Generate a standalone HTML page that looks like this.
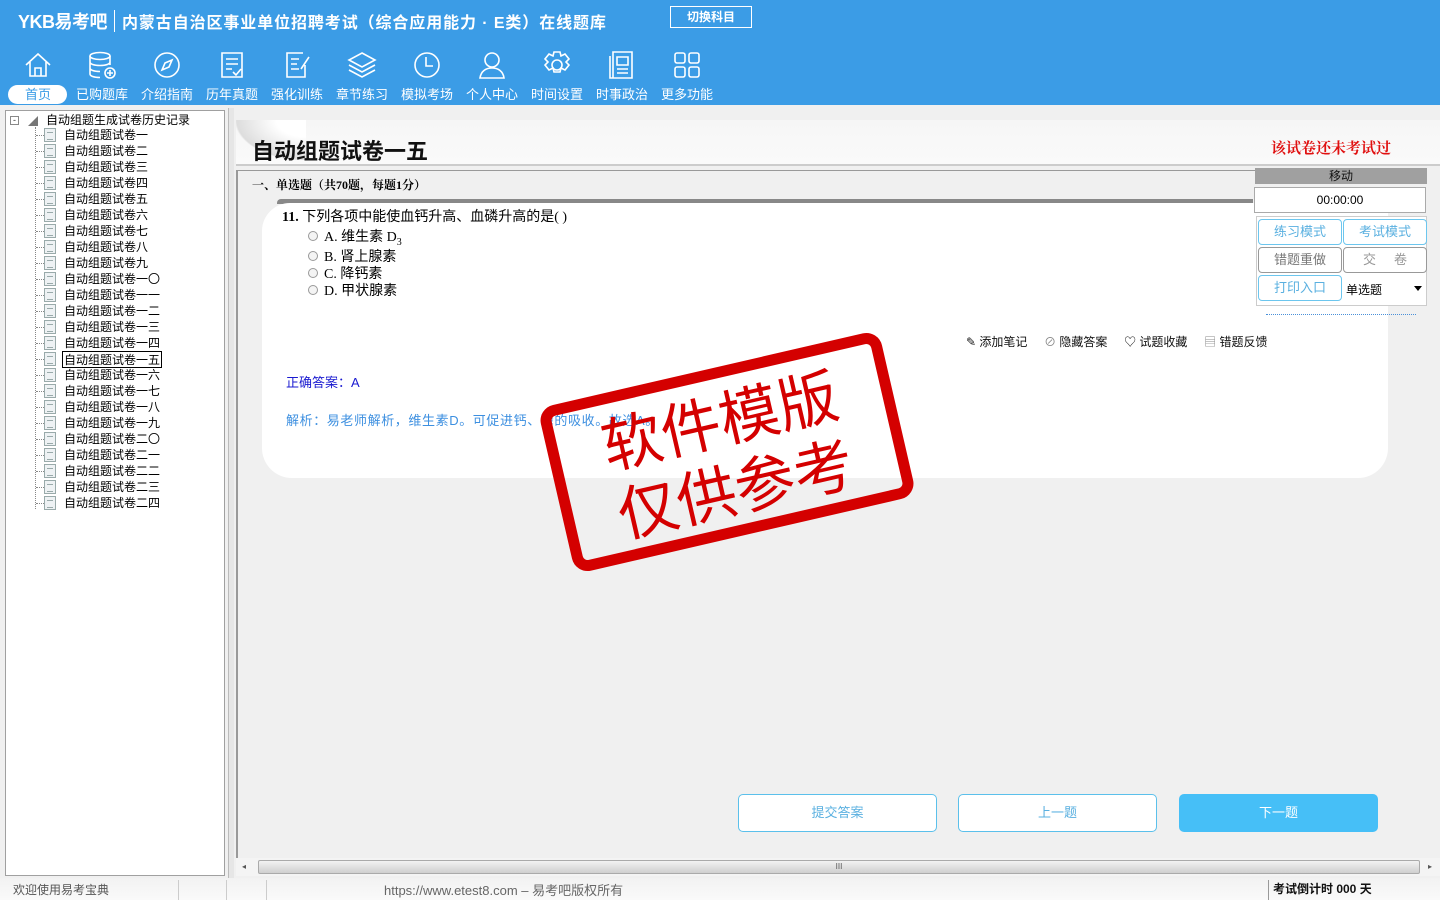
<!DOCTYPE html>
<html><head><meta charset="utf-8"><style>
*{margin:0;padding:0;box-sizing:border-box}
body{width:1440px;height:900px;overflow:hidden;background:#f0f0f0;font-family:"Liberation Sans","Noto Sans CJK SC",sans-serif;position:relative;font-size:12px}
.abs{position:absolute}
#hdr{left:0;top:0;width:1440px;height:105px;background:#3b9ce6}
.nav{position:absolute;top:49px;width:64px;text-align:center;color:#fff;font-size:13px}
.nav svg{display:block;margin:0 auto;width:32px;height:32px}
.nav span{display:block;margin-top:5px;line-height:18px}
.tree{left:5px;top:110px;width:220px;height:766px;background:#fff;border:1px solid #a0a0a0}
.it{position:absolute;left:64px;font-size:12px;color:#000;line-height:16px;height:16px}
.doc{position:absolute;left:44px;width:12px;height:14px;border:1px solid #9aa;background:#eef2f4}
.doc:after{content:"";position:absolute;left:2px;top:3px;width:6px;height:6px;border-top:1px solid #9aa;border-bottom:1px solid #9aa}
.dl{position:absolute;left:36px;width:8px;border-top:1px dotted #888}
.btn{position:absolute;top:794px;width:199px;height:38px;border:1px solid #5bc0eb;border-radius:5px;background:#fff;color:#5ab0e0;font-size:13px;text-align:center;line-height:36px}
.rb{position:absolute;width:84px;height:26px;border:1px solid #6cc6ee;border-radius:4px;background:#fff;color:#5ab0e0;font-size:13px;text-align:center;line-height:24px}
.opt{position:absolute;left:308px;font-size:14px;color:#000;font-family:"Liberation Serif","Noto Sans CJK SC",serif}
.opt i{display:inline-block;width:10px;height:10px;border:1px solid #999;border-radius:50%;margin-right:6px;background:#f4f4f4}
</style></head><body>
<div id="hdr" class="abs">
 <div class="abs" style="left:18px;top:8px;color:#fff;font-size:18px;font-weight:bold;letter-spacing:-0.5px">YKB易考吧</div>
 <div class="abs" style="left:114px;top:10px;width:1px;height:22px;background:#fff"></div>
 <div class="abs" style="left:122px;top:9px;color:#fff;font-size:16px;font-weight:bold;letter-spacing:0.9px">内蒙古自治区事业单位招聘考试（综合应用能力 · E类）在线题库</div>
 <div class="abs" style="left:670px;top:6px;width:82px;height:22px;border:1px solid #fff;color:#fff;font-size:12px;font-weight:bold;text-align:center;line-height:20px">切换科目</div>
 <div class="abs" style="left:8px;top:85px;width:59px;height:19px;background:#fff;border-radius:10px"></div>
 <div class="nav" style="left:6px"><svg viewBox="0 0 32 32" fill="none" stroke="#fff" stroke-width="1.6"><path d="M4 16L16 5l12 11M8 13v14h16V13M13 27v-8h6v8"/></svg><span style="color:#3b9ce6">首页</span></div>
 <div class="nav" style="left:70px"><svg viewBox="0 0 32 32" fill="none" stroke="#fff" stroke-width="1.6"><ellipse cx="14" cy="7" rx="10" ry="3.5"/><path d="M4 7v18c0 2 4 3.5 10 3.5M24 7v9M4 13c0 2 4 3.5 10 3.5s10-1.5 10-3.5M4 19c0 2 4 3.5 10 3.5"/><circle cx="24" cy="24" r="5"/><path d="M24 21v6M21 24h6"/></svg><span>已购题库</span></div>
 <div class="nav" style="left:135px"><svg viewBox="0 0 32 32" fill="none" stroke="#fff" stroke-width="1.6"><circle cx="16" cy="16" r="12"/><path d="M21 11l-3 7-7 3 3-7z"/></svg><span>介绍指南</span></div>
 <div class="nav" style="left:200px"><svg viewBox="0 0 32 32" fill="none" stroke="#fff" stroke-width="1.6"><path d="M6 4h20v24H6zM10 10h12M10 15h12M10 20h6M17 23l3 3 5-6"/></svg><span>历年真题</span></div>
 <div class="nav" style="left:265px"><svg viewBox="0 0 32 32" fill="none" stroke="#fff" stroke-width="1.6"><path d="M22 4H6v24h18V16M10 10h8M10 15h6M10 20h8M20 20l8-12"/></svg><span>强化训练</span></div>
 <div class="nav" style="left:330px"><svg viewBox="0 0 32 32" fill="none" stroke="#fff" stroke-width="1.6"><path d="M16 4l13 7-13 7-13-7zM3 16l13 7 13-7M3 21l13 7 13-7"/></svg><span>章节练习</span></div>
 <div class="nav" style="left:395px"><svg viewBox="0 0 32 32" fill="none" stroke="#fff" stroke-width="1.6"><circle cx="16" cy="16" r="12"/><path d="M15 8v9h7"/></svg><span>模拟考场</span></div>
 <div class="nav" style="left:460px"><svg viewBox="0 0 32 32" fill="none" stroke="#fff" stroke-width="1.6"><circle cx="16" cy="11" r="7"/><path d="M4 29c1-7 6-10 12-10s11 3 12 10z"/></svg><span>个人中心</span></div>
 <div class="nav" style="left:525px"><svg viewBox="0 0 32 32" fill="none" stroke="#fff" stroke-width="1.6"><path d="M13 3h6l1 4 4-2 4 5-3 3 3 3-4 5-4-2-1 4h-6l-1-4-4 2-4-5 3-3-3-3 4-5 4 2z"/><circle cx="16" cy="16" r="5"/></svg><span>时间设置</span></div>
 <div class="nav" style="left:590px"><svg viewBox="0 0 32 32" fill="none" stroke="#fff" stroke-width="1.6"><path d="M7 3h19v26H7zM4 7v22h3M11 8h11v8H11zM11 20h11M11 24h11"/></svg><span>时事政治</span></div>
 <div class="nav" style="left:655px"><svg viewBox="0 0 32 32" fill="none" stroke="#fff" stroke-width="1.6"><rect x="4" y="4" width="10" height="10" rx="2"/><rect x="18" y="4" width="10" height="10" rx="2"/><rect x="4" y="18" width="10" height="10" rx="2"/><rect x="18" y="18" width="10" height="10" rx="2"/></svg><span>更多功能</span></div>
</div>

<div class="abs tree">
 <div class="abs" style="left:4px;top:5px;width:9px;height:9px;border:1px solid #888;font-size:9px;line-height:6px;text-align:center;color:#333">-</div>
 <div class="abs" style="left:22px;top:5px;width:0;height:0;border-left:10px solid transparent;border-bottom:10px solid #777"></div>
 <div class="abs" style="left:29px;top:16px;height:382px;border-left:1px dotted #888"></div>
 <div class="it" style="left:40px;top:1px">自动组题生成试卷历史记录</div>
</div>
<div id="items"></div>
<script>
var n=["一","二","三","四","五","六","七","八","九","一〇","一一","一二","一三","一四","一五","一六","一七","一八","一九","二〇","二一","二二","二三","二四"];
var h="";for(var i=0;i<n.length;i++){var y=127+i*16;h+='<div class="dl" style="top:'+(y+8)+'px"></div><div class="doc" style="top:'+(y+1)+'px"></div><div class="it" style="top:'+y+'px;'+(i==14?'border:1px solid #000;padding:0 1px;left:62px;height:17px':'')+'">自动组题试卷'+n[i]+'</div>';}
document.getElementById("items").innerHTML=h;
</script>
<div class="abs" style="left:228px;top:108px;width:6px;height:770px;background:#e6e6e6;border-left:1px solid #bbb"></div>
<div class="abs" style="left:234px;top:108px;width:1206px;height:750px;background:#f0f0f0"></div>
<div class="abs" style="left:236px;top:120px;width:1204px;height:44px;background:linear-gradient(#f6f6f6,#fafafa)"></div>
<div class="abs" style="left:236px;top:120px;width:70px;height:40px;background:radial-gradient(ellipse at 100% 0%,#fff 30%,#ddd 70%,transparent 72%)"></div>
<div class="abs" style="left:252px;top:134px;font-size:22px;font-weight:bold;color:#111">自动组题试卷一五</div>
<div class="abs" style="left:1271px;top:137px;font-size:15px;font-weight:bold;color:#e01010;font-family:'Liberation Serif','Noto Serif CJK SC',serif">该试卷还未考试过</div>
<div class="abs" style="left:236px;top:164px;width:1204px;height:2px;background:#ccc"></div>
<div class="abs" style="left:236px;top:170px;width:1020px;height:1px;background:#999"></div>
<div class="abs" style="left:236px;top:170px;width:2px;height:690px;background:#999"></div>
<div class="abs" style="left:252px;top:176px;font-size:12px;font-weight:bold;font-family:'Liberation Serif','Noto Serif CJK SC',serif">一、单选题（共70题，每题1分）</div>
<div class="abs" style="left:277px;top:199px;width:976px;height:5px;background:#888;border-radius:4px 0 0 0"></div>
<div class="abs" style="left:262px;top:203px;width:1126px;height:275px;background:#fff;border-radius:28px 0 30px 30px"></div>
<div class="abs" style="left:282px;top:206px;font-size:14px;color:#000;font-family:'Liberation Serif','Noto Sans CJK SC',serif"><b>11.</b> 下列各项中能使血钙升高、血磷升高的是( )</div>
<div class="opt" style="top:226px"><i></i>A. 维生素 D<sub style="font-size:10px">3</sub></div>
<div class="opt" style="top:246px"><i></i>B. 肾上腺素</div>
<div class="opt" style="top:263px"><i></i>C. 降钙素</div>
<div class="opt" style="top:280px"><i></i>D. 甲状腺素</div>
<div class="abs" style="left:966px;top:333px;font-size:12px;color:#111;word-spacing:0">✎ 添加笔记 &nbsp;&nbsp;&nbsp;&nbsp;<span style="color:#888">⊘</span> 隐藏答案 &nbsp;&nbsp;&nbsp;&nbsp;♡ 试题收藏 &nbsp;&nbsp;&nbsp;&nbsp;<span style="color:#888">▤</span> 错题反馈</div>
<div class="abs" style="left:286px;top:372px;font-size:13px;color:#1a1ad0">正确答案：A</div>
<div class="abs" style="left:286px;top:410px;font-size:13px;color:#3c8fe0;letter-spacing:0.6px">解析：易老师解析，维生素D。可促进钙、磷的吸收。故选A。</div>

<div class="abs" style="left:1255px;top:168px;width:172px;height:16px;background:#a0a0a0;color:#111;text-align:center;font-size:12px;line-height:16px">移动</div>
<div class="abs" style="left:1254px;top:187px;width:172px;height:26px;background:#fff;border:1px solid #aaa;text-align:center;line-height:24px;font-size:12px">00:00:00</div>
<div class="abs" style="left:1256px;top:216px;width:171px;height:90px;background:#fff;border:1px solid #ccc"></div>
<div class="rb" style="left:1258px;top:219px">练习模式</div>
<div class="rb" style="left:1343px;top:219px">考试模式</div>
<div class="rb" style="left:1258px;top:247px;border-color:#999;color:#777">错题重做</div>
<div class="rb" style="left:1343px;top:247px;border-color:#999;color:#999">交 &nbsp;&nbsp;&nbsp;&nbsp;卷</div>
<div class="rb" style="left:1258px;top:275px">打印入口</div>
<div class="abs" style="left:1346px;top:281px;font-size:12px">单选题</div>
<div class="abs" style="left:1414px;top:286px;border:4px solid transparent;border-top:5px solid #000"></div>
<div class="abs" style="left:1266px;top:314px;width:150px;border-top:1px dotted #4a90d9"></div>

<div class="btn" style="left:738px">提交答案</div>
<div class="btn" style="left:958px">上一题</div>
<div class="btn" style="left:1179px;background:#46bff7;border-color:#46bff7;color:#fff">下一题</div>

<div class="abs" style="left:236px;top:858px;width:1204px;height:18px;background:#f4f4f4"></div>
<div class="abs" style="left:258px;top:860px;width:1162px;height:14px;background:linear-gradient(#f2f2f2,#cfcfcf);border:1px solid #aaa;border-radius:2px;text-align:center;font-size:8px;line-height:12px;color:#555">III</div>
<div class="abs" style="left:242px;top:862px;font-size:8px;color:#555">◂</div>
<div class="abs" style="left:1428px;top:862px;font-size:8px;color:#555">▸</div>

<div class="abs" style="left:0;top:878px;width:1440px;height:22px;background:linear-gradient(#f2f2f2,#fafafa)"></div>
<div class="abs" style="left:13px;top:881px;font-size:12px;color:#555">欢迎使用易考宝典</div>
<div class="abs" style="left:178px;top:880px;width:1px;height:20px;background:#ccc"></div>
<div class="abs" style="left:226px;top:880px;width:1px;height:20px;background:#ccc"></div>
<div class="abs" style="left:266px;top:880px;width:1px;height:20px;background:#ccc"></div>
<div class="abs" style="left:384px;top:880px;font-size:13px;color:#666">https://www.etest8.com – 易考吧版权所有</div>
<div class="abs" style="left:1268px;top:880px;width:1px;height:20px;background:#999"></div>
<div class="abs" style="left:1273px;top:880px;font-size:12px;font-weight:bold;color:#111">考试倒计时 000 天</div>

<div class="abs" style="left:552px;top:367px;width:350px;height:170px;border:11px solid #d40000;border-radius:16px;transform:rotate(-13deg);color:#d40000;font-size:60px;line-height:70px;text-align:center;font-family:'Noto Sans CJK SC',sans-serif;padding-top:4px">软件模版<br>仅供参考</div>
</body></html>
